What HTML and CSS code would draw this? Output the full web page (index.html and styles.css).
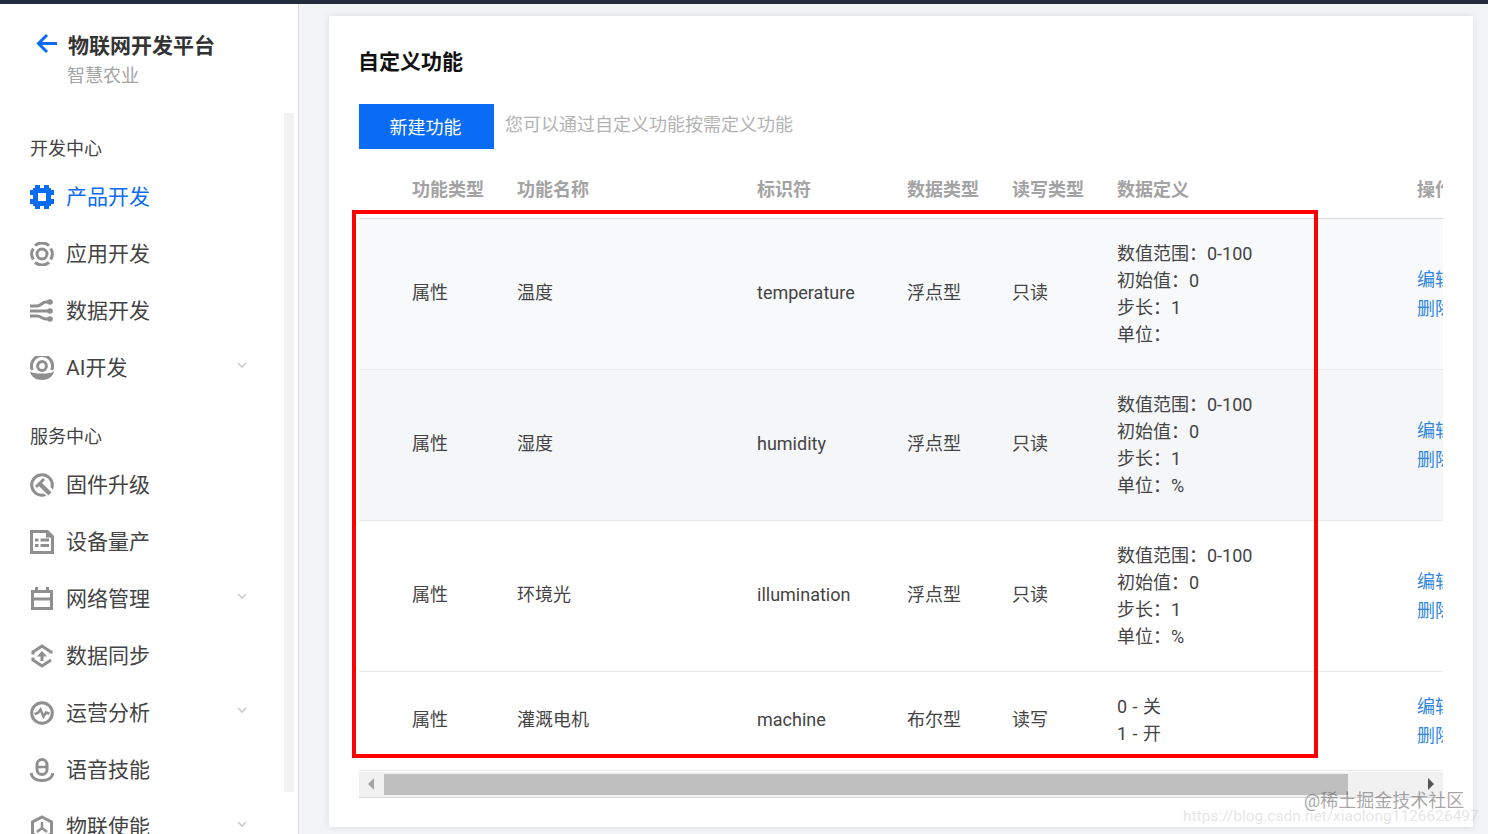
FILE: index.html
```html
<!DOCTYPE html>
<html lang="zh-CN">

<head>
    <meta charset="UTF-8">
    <title>物联网开发平台 - 自定义功能</title>
    <link rel="stylesheet" href="styles.css">
</head>

<body>
    <div class="topbar"></div>
    <div class="app">
        <aside class="sidebar">
            <div class="brand">
                <svg class="back" viewBox="0 0 22 22" width="22" height="22"><path d="M11 2 2.5 10.5 11 19M3 10.500h18" fill="none" stroke="#0a6cf5" stroke-width="3"/></svg>
                <div>
                    <div class="brand-title">物联网开发平台</div>
                    <div class="brand-sub">智慧农业</div>
                </div>
            </div>

            <div class="group first">开发中心</div>
            <a class="item active">
                <svg class="icon" viewBox="0 0 24 24"><path fill="#0a6cf5" fill-rule="evenodd" d="M5 0h5v3h4V0h5v3h2v2h3v5h-3v4h3v5h-3v2h-2v3h-5v-3h-4v3H5v-3H3v-2H0v-5h3v-4H0V5h3V3h2zM8 8v8h8V8z"/></svg>
                <span>产品开发</span>
            </a>
            <a class="item">
                <svg class="icon" viewBox="0 0 24 24"><g fill="none" stroke="#8f8f8f"><path stroke-width="3" d="M5 3.600a10.500 10.500 0 0 1 14 0M5 20.400a10.500 10.500 0 0 0 14 0M3.300 6.500a10.500 10.500 0 0 0 0 11M20.700 6.500a10.500 10.500 0 0 1 0 11"/><circle cx="12" cy="12" r="5" stroke-width="3"/></g></svg>
                <span>应用开发</span>
            </a>
            <a class="item">
                <svg class="icon" viewBox="0 0 24 24"><g fill="none" stroke="#8f8f8f" stroke-width="3"><path d="M0 7h7c4 0 5-4 9-4h3M0 12h19M0 17h7c4 0 5 3 9 3h3"/></g><g fill="#8f8f8f"><circle cx="20" cy="3" r="2.800"/><circle cx="20" cy="12" r="2.800"/><circle cx="20" cy="20" r="2.800"/></g></svg>
                <span>数据开发</span>
            </a>
            <a class="item">
                <svg class="icon" viewBox="0 0 24 24"><g fill="none" stroke="#8f8f8f"><path stroke-width="3" d="M2.300 14A10.500 10.500 0 1 1 21.700 14"/><circle cx="12" cy="10" r="4.400" stroke-width="3"/></g><path fill="#8f8f8f" d="M0 15.500c3 1.500 5 2 12 2s9-.5 12-2c-1 5-6 8.500-12 8.500S1 20.500 0 15.500z"/></svg>
                <span>AI开发</span>
                <svg class="chevron" viewBox="0 0 10 7"><path d="M1 1l4 4 4-4" fill="none" stroke="#ccc" stroke-width="1.700"/></svg>
            </a>

            <div class="group">服务中心</div>
            <a class="item">
                <svg class="icon" viewBox="0 0 24 24"><circle cx="12" cy="12" r="10.300" fill="none" stroke="#8f8f8f" stroke-width="3"/><path d="M12 12l12 12" stroke="#fff" stroke-width="9"/><path d="M9 10l11 11" stroke="#8f8f8f" stroke-width="4.500"/><path d="M6 14l8-8" stroke="#8f8f8f" stroke-width="3"/></svg>
                <span>固件升级</span>
            </a>
            <a class="item">
                <svg class="icon" viewBox="0 0 24 24"><path fill="#8f8f8f" fill-rule="evenodd" d="M0 0h18l6 6v18H0zM5 8.500v3h3.500v-3zm5.500 0v3H19v-3zM5 14v3h3.500v-3zm5.500 0v3H19v-3zM3 3v18h18V7.500h-5V3z"/></svg>
                <span>设备量产</span>
            </a>
            <a class="item">
                <svg class="icon" viewBox="0 0 24 24"><path fill="#8f8f8f" fill-rule="evenodd" d="M5 0h3v3h8V0h3v3h4v20H1V3h4zM4 6v4.500h16V6zm0 7.500V20h16v-6.500z"/></svg>
                <span>网络管理</span>
                <svg class="chevron" viewBox="0 0 10 7"><path d="M1 1l4 4 4-4" fill="none" stroke="#ccc" stroke-width="1.700"/></svg>
            </a>
            <a class="item">
                <svg class="icon" viewBox="0 0 24 24"><g fill="none" stroke="#8f8f8f" stroke-width="3"><path d="M3 8l9-6 9 6M3 16l9 6 9-6M3 6.500v4M3 13.500v4M21 6.500v3"/><path d="M12 17v-6"/></g><path fill="#8f8f8f" d="M12 7l5 5.500H7z"/></svg>
                <span>数据同步</span>
            </a>
            <a class="item">
                <svg class="icon" viewBox="0 0 24 24"><circle cx="12" cy="12" r="10.300" fill="none" stroke="#8f8f8f" stroke-width="3"/><path d="M4.500 13l3.500-1 2.500-3.500 3 7 2.500-4 3.500 1" fill="none" stroke="#8f8f8f" stroke-width="2.500"/></svg>
                <span>运营分析</span>
                <svg class="chevron" viewBox="0 0 10 7"><path d="M1 1l4 4 4-4" fill="none" stroke="#ccc" stroke-width="1.700"/></svg>
            </a>
            <a class="item">
                <svg class="icon" viewBox="0 0 24 24"><g fill="none" stroke="#8f8f8f"><rect x="7" y="1.500" width="10" height="15" rx="5" stroke-width="3"/><path stroke-width="2.500" d="M7 9h10"/><path stroke-width="3" d="M1 15c1 5 5 7.500 11 7.500S22 20 23 15"/></g></svg>
                <span>语音技能</span>
            </a>
            <a class="item">
                <svg class="icon" viewBox="0 0 24 24"><path fill="none" stroke="#8f8f8f" stroke-width="3" d="M12 2l9.500 5v12L12 23 2.500 19V7z"/><path fill="none" stroke="#8f8f8f" stroke-width="2.500" d="M12 7v6l-5 4M12 13l5 4"/></svg>
                <span>物联使能</span>
                <svg class="chevron" viewBox="0 0 10 7"><path d="M1 1l4 4 4-4" fill="none" stroke="#ccc" stroke-width="1.700"/></svg>
            </a>

            <div class="side-scroll"></div>
        </aside>

        <main class="main">
            <section class="card">
                <h2>自定义功能</h2>
                <div class="toolbar">
                    <button class="btn">新建功能</button>
                    <span class="hint">您可以通过自定义功能按需定义功能</span>
                </div>

                <div class="table-wrap">
                    <table>
                        <colgroup>
                            <col class="c-blank">
                            <col class="c-type">
                            <col class="c-name">
                            <col class="c-id">
                            <col class="c-data">
                            <col class="c-rw">
                            <col class="c-def">
                            <col class="c-op">
                        </colgroup>
                        <thead>
                            <tr>
                                <th></th>
                                <th>功能类型</th>
                                <th>功能名称</th>
                                <th>标识符</th>
                                <th>数据类型</th>
                                <th>读写类型</th>
                                <th>数据定义</th>
                                <th>操作</th>
                            </tr>
                        </thead>
                        <tbody>
                            <tr class="shaded">
                                <td></td>
                                <td>属性</td>
                                <td>温度</td>
                                <td>temperature</td>
                                <td>浮点型</td>
                                <td>只读</td>
                                <td class="def">数值范围：0-100<br>初始值：0<br>步长：1<br>单位：</td>
                                <td class="ops"><a class="op">编辑</a><a class="op">删除</a></td>
                            </tr>
                            <tr class="shaded second">
                                <td></td>
                                <td>属性</td>
                                <td>湿度</td>
                                <td>humidity</td>
                                <td>浮点型</td>
                                <td>只读</td>
                                <td class="def">数值范围：0-100<br>初始值：0<br>步长：1<br>单位：%</td>
                                <td class="ops"><a class="op">编辑</a><a class="op">删除</a></td>
                            </tr>
                            <tr>
                                <td></td>
                                <td>属性</td>
                                <td>环境光</td>
                                <td>illumination</td>
                                <td>浮点型</td>
                                <td>只读</td>
                                <td class="def">数值范围：0-100<br>初始值：0<br>步长：1<br>单位：%</td>
                                <td class="ops"><a class="op">编辑</a><a class="op">删除</a></td>
                            </tr>
                            <tr>
                                <td></td>
                                <td>属性</td>
                                <td>灌溉电机</td>
                                <td>machine</td>
                                <td>布尔型</td>
                                <td>读写</td>
                                <td class="def">0 - 关<br>1 - 开</td>
                                <td class="ops"><a class="op">编辑</a><a class="op">删除</a></td>
                            </tr>
                        </tbody>
                    </table>
                </div>

                <div class="hscroll">
                    <span class="arrow-left"></span>
                    <div class="thumb"></div>
                    <span class="arrow-right"></span>
                </div>

                <div class="highlight"></div>
            </section>
        </main>
    </div>

    <div class="mark-one">@稀土掘金技术社区</div>
    <div class="mark-two">https://blog.csdn.net/xiaolong1126626497</div>
</body>

</html>
```

FILE: styles.css
```css
body {
    font-family: Roboto, "Noto Sans CJK SC", sans-serif;
    font-size: 18px;
    margin: 0;
    padding: 0;
    height: 834px;
    overflow: hidden;
    background-color: #f3f4f7;
    color: #444;
    position: relative;
}

.topbar {
    height: 4px;
    background-color: #232c3d;
}

.app {
    display: flex;
    height: 830px;
}

/* left menu */
.sidebar {
    width: 298px;
    flex: none;
    background-color: #fff;
    border-right: 1px solid #dcdfe6;
    position: relative;
    overflow: hidden;
}

.brand {
    display: flex;
    align-items: flex-start;
    gap: 10px;
    padding: 26px 0 0 36px;
}

.back {
    margin-top: 3px;
}

.brand-title {
    font-size: 21px;
    font-weight: 700;
    line-height: 32px;
    color: #333;
}

.brand-sub {
    font-size: 18px;
    line-height: 28px;
    color: #a3a3a3;
    margin-left: -1px;
}

.group {
    font-size: 18px;
    line-height: 26px;
    color: #444;
    padding-left: 30px;
    margin-top: 28px;
    margin-bottom: 6px;
}

.group.first {
    margin-top: 46px;
    margin-bottom: 6px;
}

.item {
    display: flex;
    align-items: center;
    gap: 12px;
    height: 57px;
    padding-left: 30px;
    font-size: 21px;
    color: #444;
    position: relative;
}

.item span {
    margin-top: -4px;
}

.item.active {
    color: #0a6cf5;
}

.icon {
    width: 24px;
    height: 24px;
    flex: none;
}

.chevron {
    position: absolute;
    left: 237px;
    top: 23px;
    width: 10px;
    height: 7px;
}

.side-scroll {
    position: absolute;
    left: 284px;
    top: 109px;
    width: 10px;
    height: 679px;
    background-color: #f2f2f2;
}

/* main card */
.main {
    flex: 1;
    padding: 12px 15px 0 30px;
    min-width: 0;
}

.card {
    background-color: #fff;
    height: 811px;
    box-sizing: border-box;
    padding: 31px 30px 0 30px;
    box-shadow: 0 0 8px rgba(0, 0, 0, 0.1);
    position: relative;
}

h2 {
    font-size: 21px;
    line-height: 30px;
    font-weight: 700;
    color: #111;
    margin: 0 0 27px -1px;
}

.toolbar {
    display: flex;
    align-items: center;
    gap: 11px;
    margin-bottom: 11px;
}

.btn {
    width: 135px;
    height: 45px;
    background-color: #0a6cf5;
    color: #fff;
    font-family: inherit;
    font-size: 18px;
    border: none;
    padding: 0 2px 2px 0;
}

.hint {
    color: #b3b3b3;
    margin-top: -7px;
}

.table-wrap {
    overflow: hidden;
}

table {
    width: 1208px;
    table-layout: fixed;
    border-collapse: collapse;
}

.c-blank { width: 53px; }
.c-type { width: 105px; }
.c-name { width: 240px; }
.c-id { width: 150px; }
.c-data { width: 105px; }
.c-rw { width: 105px; }
.c-def { width: 300px; }
.c-op { width: 150px; }

th {
    height: 58px;
    padding: 0 0 2px 0;
    box-sizing: border-box;
    text-align: left;
    font-weight: 700;
    color: #a3a3a3;
    border-bottom: 1px solid #d3d6dc;
}

td {
    padding: 20px 0 22px 0;
    line-height: 27px;
    color: #444;
    border-bottom: 1px solid #e9e9eb;
}

td.def,
td.ops {
    padding: 21px 0;
}

.def {
    word-spacing: 1px;
}

tr:last-child td.def {
    padding: 20px 0 22px 0;
}

.shaded td {
    background-color: #f7f9fb;
}

.shaded.second td {
    background-color: #f5f6f8;
}

.op {
    display: block;
    color: #2f86e0;
    line-height: 27px;
}

.op + .op {
    margin-top: 2px;
}

.hscroll {
    display: flex;
    align-items: center;
    height: 26px;
    margin-top: 1px;
    background-color: #f1f1f1;
    border-bottom: 1px solid #dadada;
    box-sizing: border-box;
    position: relative;
}

.thumb {
    width: 964px;
    height: 21px;
    margin-left: 25px;
    background-color: #bfbfbf;
}

.arrow-left {
    position: absolute;
    left: 9px;
    top: 6px;
    border: 6px solid transparent;
    border-left: 0;
    border-right: 6px solid #a3a3a3;
}

.arrow-right {
    position: absolute;
    right: 9px;
    top: 6px;
    border: 6px solid transparent;
    border-right: 0;
    border-left: 6px solid #555;
}

/* red box drawn over the table */
.highlight {
    position: absolute;
    left: 23px;
    top: 194px;
    width: 958px;
    height: 540px;
    border: 4px solid #f00;
}

/* image watermarks */
.mark-one {
    position: absolute;
    left: 1304px;
    top: 789px;
    font-size: 18px;
    line-height: 24px;
    color: rgba(90, 90, 90, 0.55);
}

.mark-two {
    position: absolute;
    left: 1183px;
    top: 806px;
    font-size: 15.500px;
    line-height: 20px;
    color: rgba(190, 190, 190, 0.4);
}
```
